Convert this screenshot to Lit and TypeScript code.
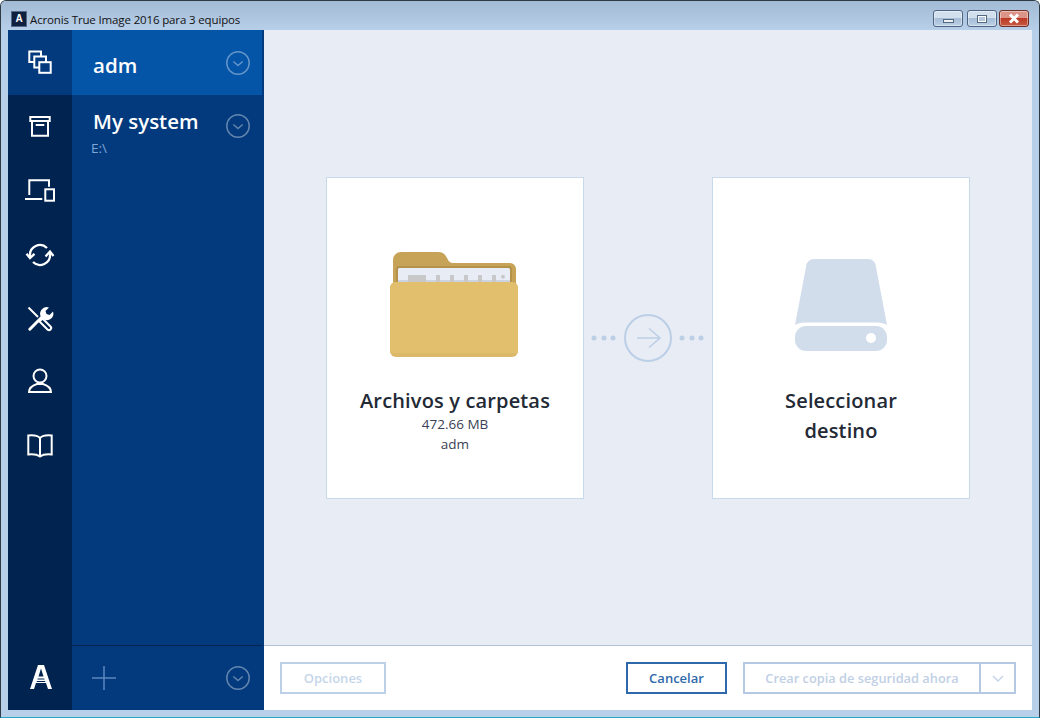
import { LitElement, html, css, svg } from "lit";
import { customElement } from "lit/decorators.js";

const chevCircle = () => html`<svg class="cc" width="24" height="24" viewBox="0 0 24 24" fill="none" stroke="#fff" stroke-opacity=".38" stroke-width="1.5"><circle cx="12" cy="12" r="11.2"/><path d="M7.3 10.5l4.700 4 4.700-4"/></svg>`;

const icons = [
  svg`<path d="M16 8.500V3.500H4.300V14h5"/><path d="M21 14V8.500H9.300v11h5"/><rect x="14.300" y="14.200" width="11.400" height="10.600"/>`,
  svg`<path d="M5.300 5h19.400v4H5.300z"/><path d="M7 9v14.700h16V9M10.700 13h8.600"/>`,
  svg`<path d="M4.300 19V4.300H24V10.700"/><path d="M0 23h17.300"/><rect x="20.300" y="13.300" width="8.700" height="11.400"/>`,
  svg`<path d="M5 16A10 10 0 0 1 22 8" stroke-width="2.300"/><path d="M25 14A10 10 0 0 1 8 22" stroke-width="2.300"/><path d="M1.500 13.800L5 18l4.500-4.200M20.500 16.500l4.500-5 3.500 4.500" stroke-width="2.300"/>`,
  svg`<path d="M3.500 3.500L13 13"/><path d="M14.500 17.500l3-3 8 8a2.100 2.100 0 0 1-3 3z"/><path d="M4.800 25.200L17 13" stroke-width="3" stroke-linecap="round"/><path d="M16.500 13.500a6.500 6.500 0 0 1 7.500-10l-3.500 3.500 1 3 3 1 3.500-3.500a6.500 6.500 0 0 1-9 8z" fill="#fff" stroke="none"/>`,
  svg`<circle cx="15" cy="8" r="6.500"/><path d="M4 24c0-4.500 5-7 8-8h6c3 1 8 3.500 8 8z"/>`,
  svg`<path d="M15 6C13 4 8 3 3.300 3.500v19c4.700-.5 9.700.5 11.700 2 2-1.500 7-2.500 11.700-2v-19C22 3 17 4 15 6zV24"/>`,
];

@customElement("app-root")
export class AppRoot extends LitElement {
  static styles = css`
    :host { display: block; width: 1040px; height: 718px; font-family: "Open Sans", "Noto Sans", sans-serif; }
    .win { width: 1040px; height: 718px; box-sizing: border-box; display: flex; flex-direction: column; background: #b7cfe9; border: 1px solid #2e3a44; border-bottom-color: #29a5c6; border-radius: 6px 6px 0 0; padding: 0 7px 7px; overflow: hidden; }
    .title { height: 29px; box-sizing: border-box; flex: none; margin: 0 -7px; padding: 7px 10px 0 10px; display: flex; align-items: center; gap: 3px; background: linear-gradient(#a3bad4, #b7cfe9); color: #111; }
    .title .t { flex: 1; font-size: 11.500px; letter-spacing: -.14px; }
    .logo { width: 14px; height: 14px; background: #10213f; border: 1px solid #fff; outline: 1px solid #51698a; outline-offset: -1px; color: #fff; font: bold 10px/14px "Liberation Sans", sans-serif; text-align: center; }
    .wb { display: flex; gap: 4px; margin-top: -1px; }
    .wb div { height: 15px; border: 1px solid #4d6582; border-radius: 3px; background: linear-gradient(#d2e0ee 45%, #a6bdd6 50%, #bdd1e7); display: flex; align-items: center; justify-content: center; box-shadow: inset 0 0 0 1px rgba(255,255,255,.4); }
    .wb .mn, .wb .mx { width: 28px; }
    .wb .cl { width: 28px; margin-left: -2px; background: linear-gradient(#dd9488 45%, #bb3a25 50%, #c85a42); border-color: #6c3028; }
    .mn i { display: block; width: 11px; height: 4px; margin-top: 5px; background: #eef2f6; border: 1px solid #53697f; box-sizing: border-box; }
    .mx i { display: block; width: 10px; height: 8px; border: 1px solid #53697f; background: #fff; box-sizing: border-box; padding: 1px; }
    .mx i::after { content: ""; display: block; width: 100%; height: 100%; background: #b4c7dc; }
    .cl svg { display: block; }
    .body { flex: 1; min-height: 0; display: flex; }
    .rail { width: 64px; flex: none; background: #00234f; display: flex; flex-direction: column; }
    .rail .it { height: 64px; flex: none; display: flex; align-items: center; justify-content: center; }
    .rail .it.sel { height: 65px; background: #023a7d; }
    .rail svg { display: block; fill: none; stroke: #fff; stroke-width: 2; }
    .rail .alogo { margin-top: auto; height: 66px; padding-left: 2px; box-sizing: border-box; display: flex; align-items: center; justify-content: center; }
    .rail .alogo svg { stroke: none; fill: #fff; }
    .panel { width: 192px; flex: none; background: #023a7d; display: flex; flex-direction: column; color: #fff; }
    .row { padding-left: 21px; position: relative; margin-right: 2px; font-size: 20.500px; font-weight: 600; }
    .row .cc { position: absolute; right: 12px; }
    .row.adm { height: 65px; box-sizing: border-box; padding-top: 4px; background: #0454a8; display: flex; align-items: center; }
    .row.adm .cc { top: 21px; }
    .row.ms { height: 64px; }
    .row.ms .cc { top: 19px; }
    .row.ms .n { line-height: 26px; margin-top: 13px; }
    .row.ms .s { font-size: 13.500px; font-weight: 400; line-height: 14px; color: #7ea6d8; margin: 7px 0 0 -2px; }
    .spacer { flex: 1; }
    .pf { height: 65px; flex: none; border-top: 1px solid #00234f; margin-right: 2px; box-sizing: border-box; display: flex; align-items: center; justify-content: space-between; padding: 0 12px 0 20px; }
    .pf svg { display: block; }
    .main { flex: 1; min-width: 0; display: flex; flex-direction: column; background: #e7ecf5; }
    .stage { flex: 1; display: flex; align-items: center; padding: 0 62px; justify-content: space-between; }
    .card { width: 258px; height: 322px; box-sizing: border-box; background: #fff; border: 1px solid #c9d9ec; display: flex; flex-direction: column; align-items: center; color: #232a36; }
    .card svg { display: block; flex: none; }
    .card .name { font-size: 20px; font-weight: 600; line-height: 30px; text-align: center; letter-spacing: .15px; }
    .card .sub { font-size: 13.500px; line-height: 20px; color: #3a3f55; }
    .c1 svg { margin: 74px 0 0 -2px; }
    .c1 .name { margin-top: 29.500px; }
    .c1 .sub { margin-top: -2.500px; }
    .c1 .sub + .sub { margin-top: 0; }
    .c2 svg { margin-top: 81px; }
    .c2 .name { margin-top: 35.500px; width: 180px; }
    .foot { height: 65px; flex: none; background: #fff; border-top: 1px solid #b2bfd1; box-sizing: border-box; display: flex; align-items: center; padding: 0 16px; gap: 16px; }
    .btn { height: 32px; box-sizing: border-box; border: 2px solid #bcd0e8; display: flex; align-items: center; justify-content: center; font-size: 13px; font-weight: 600; color: #c6d6ea; background: #fff; }
    .btn.op { width: 106px; margin-right: auto; }
    .btn.ca { width: 101px; border-color: #2f69ab; color: #2f69ab; }
    .split { display: flex; }
    .split .go { width: 238px; border-color: #b6c9e3; color: #bfcfe5; font-size: 12.800px; }
    .split .dd { width: 35px; border-left: 0; border-color: #b6c9e3; }
  `;

  render() {
    return html`<div class="win">
      <div class="title">
        <div class="logo">A</div>
        <div class="t">Acronis True Image 2016 para 3 equipos</div>
        <div class="wb">
          <div class="mn"><i></i></div>
          <div class="mx"><i></i></div>
          <div class="cl"><svg width="14" height="11" viewBox="0 0 14 11"><path d="M3 1.500l8 8M11 1.500l-8 8" stroke="#fff" stroke-width="3"/></svg></div>
        </div>
      </div>
      <div class="body">
        <nav class="rail">
          ${icons.map((p, i) => html`<div class="it ${i === 0 ? "sel" : ""}"><svg width="30" height="30" viewBox="0 0 30 30">${p}</svg></div>`)}
          <div class="alogo"><svg width="22" height="24" viewBox="0 0 22 24"><path fill-rule="evenodd" d="M8 0h6l8 24h-4l-2-6H6l-2 6H0zM11 3.500L8.500 11.500h5zM7.700 13.500l-.3 1h7.200l-.3-1zM6.900 16l-.3 1h8.800l-.3-1z"/></svg></div>
        </nav>
        <aside class="panel">
          <div class="row adm">adm ${chevCircle()}</div>
          <div class="row ms"><div class="n">My system</div><div class="s">E:\\</div>${chevCircle()}</div>
          <div class="spacer"></div>
          <div class="pf">
            <svg width="24" height="24" viewBox="0 0 24 24" stroke="#5c86bf" stroke-width="1.500"><path d="M12 0v24M0 12h24"/></svg>
            ${chevCircle()}
          </div>
        </aside>
        <main class="main">
          <div class="stage">
            <div class="card c1">
              <svg width="128" height="105" viewBox="0 0 128 105">
                <path d="M3 8a8 8 0 0 1 8-8h37c5 0 7 2 9 6 2 4 3 5 7 5h56a6 6 0 0 1 6 6v20H3z" fill="#c6a357"/>
                <rect x="6" y="14" width="116" height="20" rx="3" fill="#b5924a"/>
                <rect x="8" y="16" width="112" height="15" rx="1.500" fill="#e7ecf5"/>
                <path d="M8 28h112v3H8z" fill="#ccd4e1"/>
                <path d="M18 23h18v7H18zM46 23h4v7h-4zM60 23h4v7h-4zM74 23h4v7h-4zM88 23h4v7h-4zM102 23h4v7h-4z" fill="#c8c8c8"/>
                <circle cx="113" cy="24.700" r="2" fill="#c8c8c8"/>
                <rect y="30" width="128" height="75" rx="6" fill="#dcb968"/>
                <path d="M0 36a6 6 0 0 1 6-6h116a6 6 0 0 1 6 6v65H0z" fill="#e1bf6d"/>
              </svg>
              <div class="name">Archivos y carpetas</div>
              <div class="sub">472.66 MB</div>
              <div class="sub">adm</div>
            </div>
            <svg width="114" height="50" viewBox="0 0 114 50" fill="#bccfe6">
              <circle cx="3" cy="25" r="2.500"/><circle cx="13" cy="25" r="2.500"/><circle cx="22" cy="25" r="2.500"/>
              <circle cx="91" cy="25" r="2.500"/><circle cx="101" cy="25" r="2.500"/><circle cx="110" cy="25" r="2.500"/>
              <g fill="none" stroke="#bccfe6"><circle cx="57" cy="25" r="23" stroke-width="2"/><path d="M46 25h23M58 15.500l11 9.500-11 9.500" stroke-width="1.500"/></g>
            </svg>
            <div class="card c2">
              <svg width="92" height="92" viewBox="0 0 92 92" fill="#d2ddec">
                <path d="M11 8a8 8 0 0 1 8-8h54a8 8 0 0 1 8 8l11 58c-2-1.500-6-2.500-10-2.500H10c-4 0-8 1-10 2.500z"/>
                <rect y="67" width="92" height="25" rx="11"/>
                <circle cx="76" cy="79" r="5" fill="#fff"/>
              </svg>
              <div class="name">Seleccionar destino</div>
            </div>
          </div>
          <div class="foot">
            <div class="btn op">Opciones</div>
            <div class="btn ca">Cancelar</div>
            <div class="split">
              <div class="btn go">Crear copia de seguridad ahora</div>
              <div class="btn dd"><svg width="12" height="7" viewBox="0 0 12 7" fill="none" stroke="#c6d6ea" stroke-width="1.500"><path d="M1 1l5 5 5-5"/></svg></div>
            </div>
          </div>
        </main>
      </div>
    </div>`;
  }
}
